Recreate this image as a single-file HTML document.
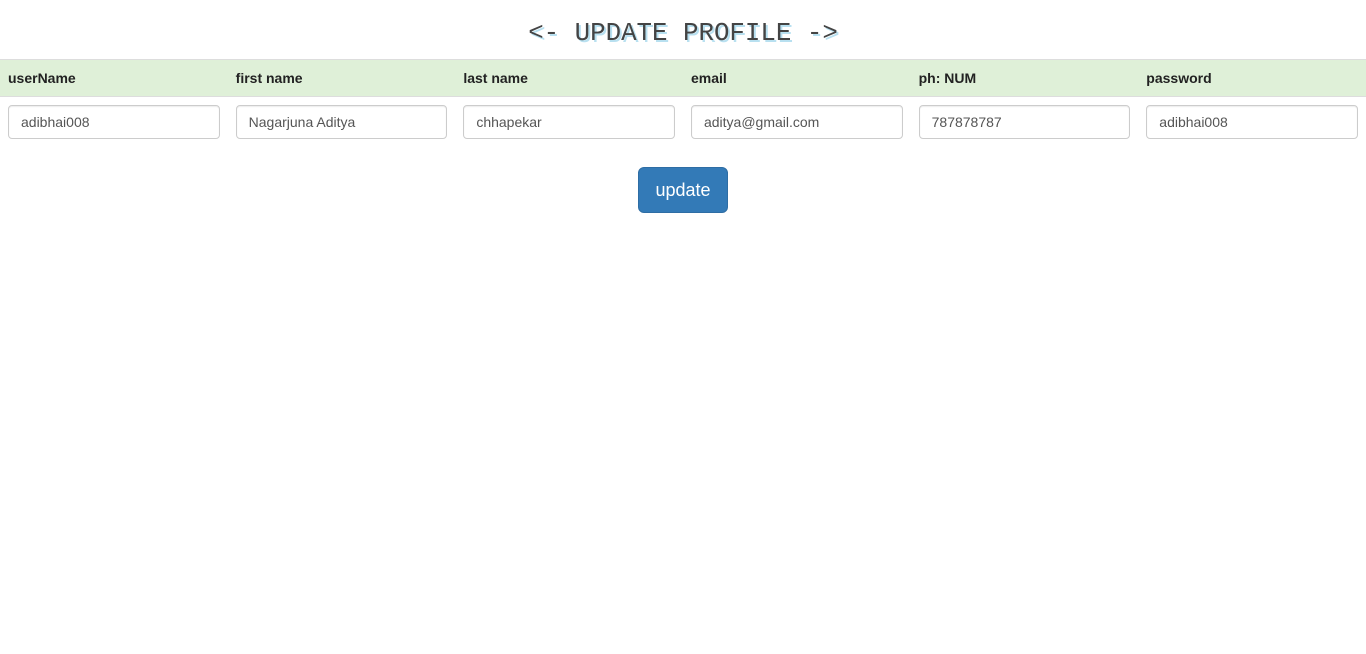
<!DOCTYPE html>
<html><head><style>
body{margin:0;background:#fff;font-family:"Liberation Sans",sans-serif;font-size:14px;color:#333;}
h1{margin:0;position:absolute;top:17px;left:0;width:1366px;text-align:center;font-family:"Liberation Mono","Courier New",monospace;font-weight:normal;font-size:25.8px;line-height:34px;color:#444;text-shadow:2px 2px 0 #b8e0f0;}
table{position:absolute;top:59px;left:0;width:1366px;border-collapse:collapse;table-layout:fixed;}
th{background:#dff0d8;text-align:left;font-weight:bold;padding:0 8px;height:36px;border-top:1px solid #ddd;border-bottom:1px solid #ddd;color:#222;}
td{padding:8px;}
input{box-sizing:border-box;width:100%;height:34px;border:1px solid #ccc;border-radius:4px;padding:6px 12px;font:14px "Liberation Sans",sans-serif;color:#555;box-shadow:inset 0 1px 1px rgba(0,0,0,.075);}
.btn{position:absolute;left:638px;top:167px;width:90px;height:46px;box-sizing:border-box;background:#337ab7;border:1px solid #2e6da4;border-radius:6px;color:#fff;font-size:18px;text-align:center;line-height:44px;}
</style></head><body>
<h1>&lt;- UPDATE PROFILE -&gt;</h1>
<table>
<tr><th>userName</th><th>first name</th><th>last name</th><th>email</th><th>ph: NUM</th><th>password</th></tr>
<tr><td><input value="adibhai008"></td><td><input value="Nagarjuna Aditya"></td><td><input value="chhapekar"></td><td><input value="aditya@gmail.com"></td><td><input value="787878787"></td><td><input value="adibhai008"></td></tr>
</table>
<div class="btn">update</div>
</body></html>
